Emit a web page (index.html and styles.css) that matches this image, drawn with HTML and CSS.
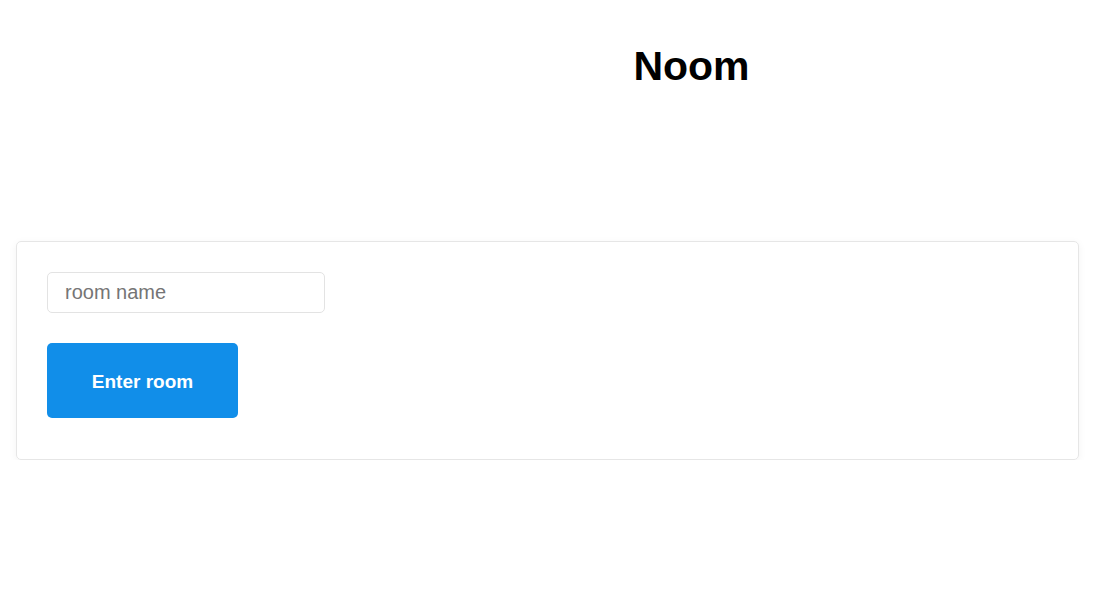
FILE: index.html
```html
<!DOCTYPE html>
<html>
<head>
<meta charset="utf-8">
<link rel="stylesheet" href="styles.css">
</head>
<body>
<header class="header">
  <h1 class="title">Noom</h1>
</header>
<main class="main">
  <form class="card">
    <input class="room-input" type="text" placeholder="room name">
    <button class="enter-btn" type="button">Enter room</button>
  </form>
</main>
</body>
</html>
```

FILE: styles.css
```css
html, body {
  margin: 0;
  padding: 0;
  background: #fff;
}
body {
  font-family: "Liberation Sans", Arial, sans-serif;
}
.header {
  display: flex;
  justify-content: center;
  padding-left: 290px;
  height: 241px;
  box-sizing: border-box;
}
.title {
  margin: 38px 0 0 0;
  font-size: 41px;
  line-height: 56px;
  font-weight: 700;
  color: #000;
}
.main {
  padding: 0 14px 0 16px;
}
.card {
  display: flex;
  flex-direction: column;
  align-items: flex-start;
  gap: 30px;
  border: 1px solid #e6e6e6;
  border-radius: 5px;
  box-shadow: 0 2px 8px rgba(0,0,0,0.05);
  padding: 30px 30px 41px 30px;
  margin: 0;
}
.room-input {
  width: 278px;
  height: 41px;
  box-sizing: border-box;
  border: 1px solid #e3e3e3;
  border-radius: 5px;
  padding: 0 17px;
  font-family: "Liberation Sans", Arial, sans-serif;
  font-size: 20px;
  color: #222;
  outline: none;
}
.room-input::placeholder {
  color: #757575;
}
.enter-btn {
  width: 191px;
  height: 75px;
  border: none;
  border-radius: 5px;
  background: #118ee9;
  color: #fff;
  font-family: "Liberation Sans", Arial, sans-serif;
  font-weight: 700;
  font-size: 19px;
  padding: 3px 0 0 0;
  cursor: pointer;
}
```
